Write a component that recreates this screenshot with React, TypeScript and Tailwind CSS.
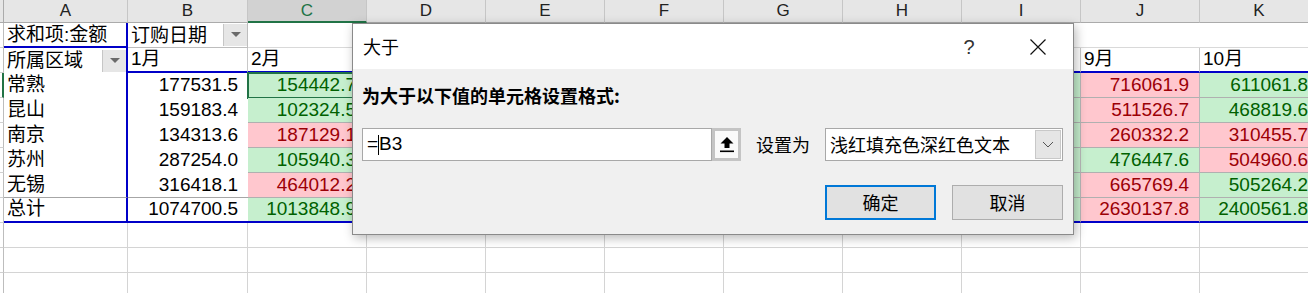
import React from "react";

const FONT = "font-['Liberation_Sans','Noto_Sans_CJK_SC',sans-serif]";
const UIFONT = "font-['Noto_Sans_CJK_SC','Liberation_Sans',sans-serif]";
const G = "bg-[#c6efce] text-[#006100]";
const R = "bg-[#ffc7ce] text-[#9c0006]";

const letters = ["A", "B", "C", "D", "E", "F", "G", "H", "I", "J", "K"];
const widths = ["w-[124px]", "w-[120px]", "w-[119px]", "w-[119px]", "w-[119px]", "w-[119px]", "w-[119px]", "w-[119px]", "w-[119px]", "w-[119px]", "w-[119px]"];

const regions = ["常熟", "昆山", "南京", "苏州", "无锡", "总计"];
const colB = ["177531.5", "159183.4", "134313.6", "287254.0", "316418.1", "1074700.5"];

type Col = { v: string[]; c: string };
const months: Col[] = [
  { v: ["154442.7", "102324.5", "187129.1", "105940.3", "464012.2", "1013848.9"], c: "ggrgrg" },
  { v: ["201345.2", "187654.3", "176543.2", "198765.4", "223456.7", "987765.0"], c: "grggrg" },
  { v: ["231045.6", "145623.1", "265412.9", "187451.2", "301245.8", "1130778.6"], c: "rgrggr" },
  { v: ["198452.3", "176321.4", "154236.8", "245123.7", "287451.2", "1061585.4"], c: "ggrrgg" },
  { v: ["245612.3", "198745.2", "176452.1", "265412.8", "312456.7", "1198679.1"], c: "rrgggr" },
  { v: ["287451.3", "215634.8", "198452.6", "276512.4", "345126.9", "1323178.0"], c: "grgrgg" },
  { v: ["312456.2", "245123.6", "212345.8", "298745.1", "367451.3", "1436122.0"], c: "gggggg" },
  { v: ["716061.9", "511526.7", "260332.2", "476447.6", "665769.4", "2630137.8"], c: "rrrgrr" },
  { v: ["611061.8", "468819.6", "310455.7", "504960.6", "505264.2", "2400561.8"], c: "ggrrgg" },
];
const monthNames = ["2月", "3月", "4月", "5月", "6月", "7月", "8月", "9月", "10月"];

function RowHdr({ active = false }: { active?: boolean }) {
  return (
    <div
      className={`w-[4px] shrink-0 bg-white border-b border-[#d0d0d0] ${
        active ? "border-r-2 border-r-[#217346]" : "border-r border-r-[#bdbdbd]"
      }`}
    />
  );
}

function DropBtn() {
  return (
    <div className="ml-auto w-[24px] h-[22px] bg-[#e6e6e6] border-l border-[#c6c6c6] flex items-center justify-center">
      <svg width="10" height="6" viewBox="0 0 10 6">
        <polygon points="0,0 10,0 5,5" fill="#6a6a6a" />
      </svg>
    </div>
  );
}

export default function App() {
  return (
    <div className={`relative w-[1308px] h-[293px] overflow-hidden bg-white text-black ${FONT}`}>
      {/* column header */}
      <div className="flex h-[23px]">
        <div className="w-[4px] shrink-0 bg-[#e6e6e6] border-r border-b border-[#ababab]" />
        {letters.map((l, i) => (
          <div
            key={l}
            className={`${widths[i]} shrink-0 flex items-center justify-center text-[17px] border-r border-r-[#c6c6c6] ${
              l === "C"
                ? "bg-[#d2d2d2] text-[#217346] border-b-2 border-b-[#217346]"
                : "bg-[#e6e6e6] text-[#222] border-b border-b-[#ababab]"
            }`}
          >
            {l}
          </div>
        ))}
      </div>

      {/* row 1 */}
      <div className="flex h-[25px] text-[19px] leading-[23px]">
        <RowHdr />
        <div className="w-[124px] shrink-0 pl-[3px] border-r-2 border-b-2 border-[#0000c8] flex items-center whitespace-nowrap">
          求和项:金额
        </div>
        <div className="w-[120px] shrink-0 pl-[3px] border-r border-b border-[#bdbdbd] flex items-center whitespace-nowrap">
          <span>订购日期</span>
          <DropBtn />
        </div>
        {months.map((_, i) => (
          <div key={i} className="w-[119px] shrink-0 border-b border-[#d9d9d9]" />
        ))}
      </div>

      {/* row 2 */}
      <div className="flex h-[25px] text-[19px] leading-[23px]">
        <RowHdr />
        <div className="w-[124px] shrink-0 pl-[3px] border-r-2 border-[#0000c8] flex items-center whitespace-nowrap">
          <span>所属区域</span>
          <DropBtn />
        </div>
        <div className="w-[120px] shrink-0 pl-[3px] border-r border-r-[#c8c8c8] border-b-2 border-b-[#0000c8] flex items-end pb-[1px]">
          1月
        </div>
        {monthNames.map((m) => (
          <div
            key={m}
            className="w-[119px] shrink-0 pl-[3px] border-r border-r-[#c8c8c8] border-b-2 border-b-[#0000c8] flex items-end pb-[1px]"
          >
            {m}
          </div>
        ))}
      </div>

      {/* data rows */}
      {regions.map((name, r) => {
        const total = r === 5;
        const grayBottom = r === 4;
        return (
          <div key={name} className="flex h-[25px] text-[19px]">
            <RowHdr active={r === 0} />
            <div
              className={`w-[124px] shrink-0 pl-[3px] border-r-2 border-r-[#0000c8] flex items-center whitespace-nowrap ${
                total ? "border-b-2 border-b-[#0000c8]" : grayBottom ? "border-b border-b-[#a6a6a6]" : ""
              }`}
            >
              {name}
            </div>
            <div
              className={`w-[120px] shrink-0 pr-[10px] flex items-center justify-end ${
                total ? "border-b-2 border-b-[#0000c8]" : grayBottom ? "border-b border-b-[#a6a6a6]" : ""
              }`}
            >
              {colB[r]}
            </div>
            {months.map((m, ci) => (
              <div
                key={ci}
                className={`relative w-[119px] shrink-0 pr-[10px] flex items-center justify-end border-r border-r-[#b8b8b8] ${
                  m.c[r] === "g" ? G : R
                } ${total ? "border-b-2 border-b-[#0000c8]" : "border-b border-b-[#b0b0b0]"}`}
              >
                {m.v[r]}
                {ci === 0 && r === 0 && (
                  <div className="absolute left-[-1px] top-[-1px] w-[121px] h-[27px] border-2 border-[#217346]" />
                )}
              </div>
            ))}
          </div>
        );
      })}

      {/* empty rows */}
      {[0, 1, 2].map((k) => (
        <div key={k} className="flex h-[25px]">
          <RowHdr />
          {widths.map((w, i) => (
            <div key={i} className={`${w} shrink-0 border-r border-b border-[#d4d4d4]`} />
          ))}
        </div>
      ))}

      {/* dialog */}
      <div
        className={`absolute left-[352px] top-[23px] w-[722px] h-[212px] border border-[#8a8a8a] bg-[#f0f0f0] shadow-[2px_3px_10px_rgba(0,0,0,0.28)] flex flex-col ${UIFONT}`}
      >
        <div className="h-[45px] bg-white flex items-center pl-[10px] shrink-0">
          <span className="text-[18px] text-black">大于</span>
          <span className="ml-auto w-[20px] text-center text-[20px] text-[#333] font-['Liberation_Sans',sans-serif]">?</span>
          <svg className="ml-[51px] mr-[27px]" width="16" height="16" viewBox="0 0 16 16">
            <path d="M0.5 0.5 L15.5 15.5 M15.5 0.5 L0.5 15.5" stroke="#111" strokeWidth="1.2" fill="none" />
          </svg>
        </div>
        <div className="flex-1 px-[9px] flex flex-col">
          <div className="mt-[13px] h-[26px] leading-[26px] text-[18px] font-bold text-black">
            为大于以下值的单元格设置格式:
          </div>
          <div className="mt-[20px] h-[33px] flex items-center">
            <div className="w-[350px] h-[33px] bg-white border border-[#a8a8a8] flex items-center pl-[4px] text-[19px] font-['Liberation_Sans',sans-serif]">
              <span>=</span>
              <span className="w-[1px] h-[20px] bg-black" />
              <span>B3</span>
            </div>
            <div className="w-[29px] h-[33px] border-[3px] border-[#c4c4c4] bg-[#fafafa] flex items-center justify-center">
              <svg width="16" height="18" viewBox="0 0 16 18">
                <polygon points="8,1 14.5,7.5 10.5,7.5 10.5,12 5.5,12 5.5,7.5 1.5,7.5" fill="#000" />
                <rect x="1" y="14.5" width="14" height="1.6" fill="#000" />
              </svg>
            </div>
            <div className="ml-[15px] w-[69px] text-[18px] text-black">设置为</div>
            <div className="w-[238px] h-[33px] bg-white border border-[#a8a8a8] flex items-center pl-[4px]">
              <span className="text-[18px] text-black whitespace-nowrap">浅红填充色深红色文本</span>
              <div className="ml-auto mr-[1px] w-[26px] h-[29px] bg-[#e5e5e5] border border-[#c8c8c8] flex items-center justify-center">
                <svg width="12" height="7" viewBox="0 0 12 7">
                  <path d="M1 1 L6 6 L11 1" stroke="#555" strokeWidth="1" fill="none" />
                </svg>
              </div>
            </div>
          </div>
          <div className="mt-[24px] mr-[1px] flex justify-end gap-[16px]">
            <div className="w-[111px] h-[35px] bg-[#e1e1e1] border-2 border-[#0078d7] flex items-center justify-center text-[18px] text-black">
              确定
            </div>
            <div className="w-[111px] h-[35px] bg-[#e1e1e1] border border-[#adadad] flex items-center justify-center text-[18px] text-black">
              取消
            </div>
          </div>
        </div>
      </div>
    </div>
  );
}
